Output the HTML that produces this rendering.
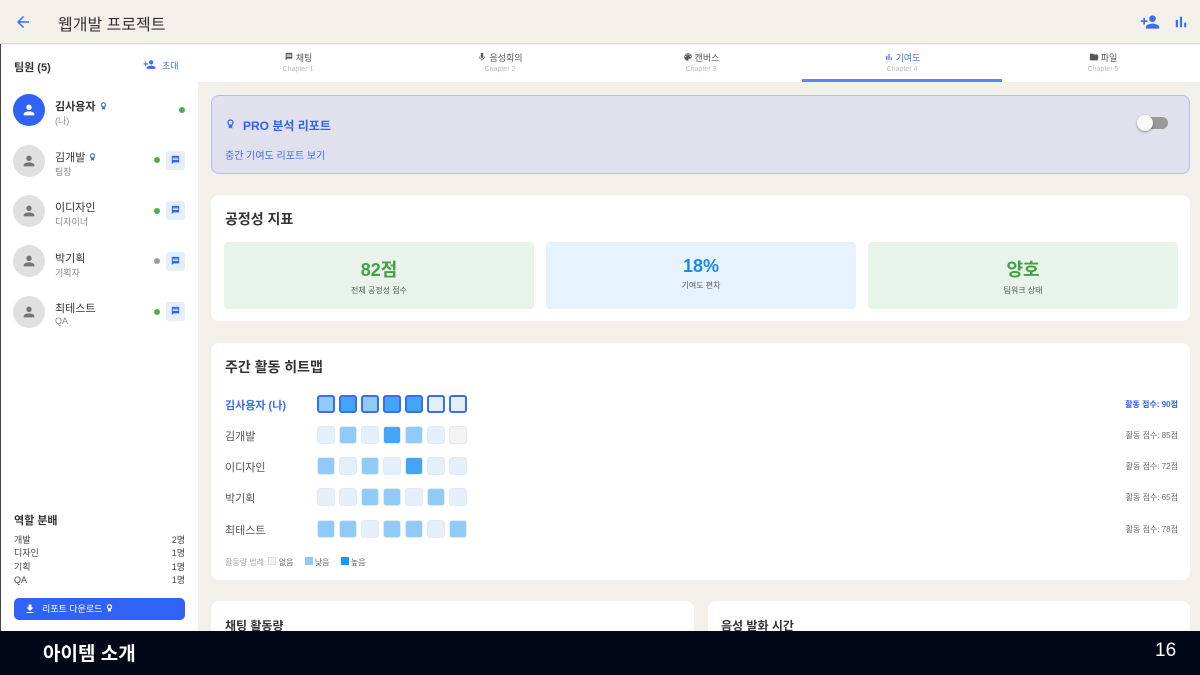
<!DOCTYPE html>
<html><head><meta charset="utf-8"><style>
*{box-sizing:border-box;margin:0;padding:0}
body{width:1200px;height:675px;overflow:hidden;background:#f3f0ea;font-family:"Liberation Sans","Noto Sans CJK KR",sans-serif;position:relative;color:#222}
.abs{position:absolute}
.hdr{left:0;top:0;width:1200px;height:44px;background:#f3f0ea;border-bottom:1px solid #d8d8d8}
.side{left:1px;top:45px;width:197px;height:586px;background:#fff}
.tabs{left:198px;top:45px;width:1002px;height:37px;background:#fff}
.tab{position:absolute;top:0;width:200px;height:37px;text-align:center;font-size:9px;color:#555}
.tab svg{vertical-align:-1px;margin-right:2px}
.tab .c{font-size:7px;color:#bbb;margin-top:2px}
.card{position:absolute;background:#fff;border-radius:8px}
.av{position:absolute;left:13px;width:32px;height:32px;border-radius:50%;background:#e0e0e0}
.nm{position:absolute;left:55px;font-size:11px;color:#333}
.sb{position:absolute;left:55px;font-size:9px;color:#888}
.dot{position:absolute;width:6px;height:6px;border-radius:50%;background:#4caf50}
.chat{position:absolute;left:166px;width:19px;height:19px;background:#e3effd;border-radius:3px}
.cell{position:absolute;width:18px;height:18px;border-radius:3px;border:1px solid #e3eaf3}
.rl{position:absolute;left:225px;font-size:11px;color:#555}
.sc{position:absolute;right:22px;font-size:8px;color:#666}
.aw{display:inline-block;vertical-align:-1px}
</style></head><body>
<div class="abs hdr"></div>
<svg class="abs" style="left:14px;top:13px" width="18" height="18" viewBox="0 0 24 24"><path d="M20 11H7.8l5.6-5.6L12 4l-8 8 8 8 1.4-1.4L7.8 13H20z" fill="#3a6cf4"/></svg>
<div class="abs" style="left:58px;top:11px;font-size:16px;color:#333">웹개발 프로젝트</div>
<svg class="abs" style="left:1140px;top:12px" width="20" height="20" viewBox="0 0 24 24"><path d="M15 12c2.2 0 4-1.8 4-4s-1.8-4-4-4-4 1.8-4 4 1.8 4 4 4zm-9-2V7H4v3H1v2h3v3h2v-3h3v-2H6zm9 4c-2.7 0-8 1.3-8 4v2h16v-2c0-2.7-5.3-4-8-4z" fill="#3a6cf4"/></svg>
<svg class="abs" style="left:1172px;top:13px" width="18" height="18" viewBox="0 0 24 24"><path d="M5 9.2h3V19H5zM10.6 5h2.8v14h-2.8zm5.6 8H19v6h-2.8z" fill="#3a6cf4"/></svg>

<div class="abs side"></div>
<div class="abs" style="left:0;top:44px;width:1px;height:587px;background:#444"></div>
<div class="abs" style="left:14px;top:59px;font-size:11px;font-weight:bold;color:#333">팀원 (5)</div>
<svg class="abs" style="left:143px;top:58px" width="13" height="13" viewBox="0 0 24 24"><path d="M15 12c2.2 0 4-1.8 4-4s-1.8-4-4-4-4 1.8-4 4 1.8 4 4 4zm-9-2V7H4v3H1v2h3v3h2v-3h3v-2H6zm9 4c-2.7 0-8 1.3-8 4v2h16v-2c0-2.7-5.3-4-8-4z" fill="#3a6cf4"/></svg>
<div class="abs" style="left:162px;top:59px;font-size:9px;color:#3a6cf4">초대</div>

<div class="av" style="top:94px;background:#2f62f5"></div>
<svg class="abs" style="left:21px;top:102px" width="16" height="16" viewBox="0 0 24 24"><path d="M12 12c2.2 0 4-1.8 4-4s-1.8-4-4-4-4 1.8-4 4 1.8 4 4 4zm0 2c-2.7 0-8 1.3-8 4v2h16v-2c0-2.7-5.3-4-8-4z" fill="#fff"/></svg>
<div class="nm" style="top:98px;font-weight:bold">김사용자 <svg class="aw" width="9" height="10" viewBox="0 0 24 24"><path d="M12 2a7 7 0 00-4 12.7V22l4-2 4 2v-7.3A7 7 0 0012 2zm0 11a4 4 0 110-8 4 4 0 010 8z" fill="#3a6cf4"/></svg></div><div class="sb" style="top:114px">(나)</div>
<div class="dot" style="left:179px;top:107px"></div>

<div class="av" style="top:145px"></div><div class="nm" style="top:149px">김개발 <svg class="aw" width="9" height="10" viewBox="0 0 24 24"><path d="M12 2a7 7 0 00-4 12.7V22l4-2 4 2v-7.3A7 7 0 0012 2zm0 11a4 4 0 110-8 4 4 0 010 8z" fill="#3a6cf4"/></svg></div><div class="sb" style="top:165px">팀장</div><div class="dot" style="left:154px;top:157px"></div><div class="chat" style="top:151px"></div>
<div class="av" style="top:195px"></div><div class="nm" style="top:199px">이디자인</div><div class="sb" style="top:215px">디자이너</div><div class="dot" style="left:154px;top:208px"></div><div class="chat" style="top:201px"></div>
<div class="av" style="top:245px"></div><div class="nm" style="top:250px">박기획</div><div class="sb" style="top:266px">기획자</div><div class="dot" style="left:154px;top:258px;background:#9e9e9e"></div><div class="chat" style="top:252px"></div>
<div class="av" style="top:296px"></div><div class="nm" style="top:300px">최테스트</div><div class="sb" style="top:316px">QA</div><div class="dot" style="left:154px;top:309px"></div><div class="chat" style="top:302px"></div>
<svg class="abs" style="left:21px;top:153px" width="16" height="16" viewBox="0 0 24 24"><path d="M12 12c2.2 0 4-1.8 4-4s-1.8-4-4-4-4 1.8-4 4 1.8 4 4 4zm0 2c-2.7 0-8 1.3-8 4v2h16v-2c0-2.7-5.3-4-8-4z" fill="#757575"/></svg>
<svg class="abs" style="left:21px;top:203px" width="16" height="16" viewBox="0 0 24 24"><path d="M12 12c2.2 0 4-1.8 4-4s-1.8-4-4-4-4 1.8-4 4 1.8 4 4 4zm0 2c-2.7 0-8 1.3-8 4v2h16v-2c0-2.7-5.3-4-8-4z" fill="#757575"/></svg>
<svg class="abs" style="left:21px;top:253px" width="16" height="16" viewBox="0 0 24 24"><path d="M12 12c2.2 0 4-1.8 4-4s-1.8-4-4-4-4 1.8-4 4 1.8 4 4 4zm0 2c-2.7 0-8 1.3-8 4v2h16v-2c0-2.7-5.3-4-8-4z" fill="#757575"/></svg>
<svg class="abs" style="left:21px;top:304px" width="16" height="16" viewBox="0 0 24 24"><path d="M12 12c2.2 0 4-1.8 4-4s-1.8-4-4-4-4 1.8-4 4 1.8 4 4 4zm0 2c-2.7 0-8 1.3-8 4v2h16v-2c0-2.7-5.3-4-8-4z" fill="#757575"/></svg>
<svg class="abs" style="left:170px;top:155px" width="11" height="11" viewBox="0 0 24 24"><path d="M20 2H4v18l4-4h12zM6 9h12v2H6zm0-3h12v2H6z" fill="#2f62f5"/></svg>
<svg class="abs" style="left:170px;top:205px" width="11" height="11" viewBox="0 0 24 24"><path d="M20 2H4v18l4-4h12zM6 9h12v2H6zm0-3h12v2H6z" fill="#2f62f5"/></svg>
<svg class="abs" style="left:170px;top:256px" width="11" height="11" viewBox="0 0 24 24"><path d="M20 2H4v18l4-4h12zM6 9h12v2H6zm0-3h12v2H6z" fill="#2f62f5"/></svg>
<svg class="abs" style="left:170px;top:306px" width="11" height="11" viewBox="0 0 24 24"><path d="M20 2H4v18l4-4h12zM6 9h12v2H6zm0-3h12v2H6z" fill="#2f62f5"/></svg>

<div class="abs" style="left:14px;top:512px;font-size:11px;font-weight:bold;color:#333">역할 분배</div>
<div class="abs" style="left:14px;top:534px;width:171px;font-size:9px;color:#444;line-height:13.3px">
<div style="display:flex;justify-content:space-between"><span>개발</span><span>2명</span></div>
<div style="display:flex;justify-content:space-between"><span>디자인</span><span>1명</span></div>
<div style="display:flex;justify-content:space-between"><span>기획</span><span>1명</span></div>
<div style="display:flex;justify-content:space-between"><span>QA</span><span>1명</span></div></div>
<div class="abs" style="left:14px;top:598px;width:171px;height:22px;background:#2f62f5;border-radius:5px;color:#fff;font-size:9px;line-height:22px;padding-left:28px">리포트 다운로드 <svg class="aw" width="9" height="10" viewBox="0 0 24 24"><path d="M12 2a7 7 0 00-4 12.7V22l4-2 4 2v-7.3A7 7 0 0012 2zm0 11a4 4 0 110-8 4 4 0 010 8z" fill="#fff"/></svg></div>
<svg class="abs" style="left:24px;top:603px" width="12" height="12" viewBox="0 0 24 24"><path d="M19 9h-4V3H9v6H5l7 7 7-7zM5 18v2h14v-2z" fill="#fff"/></svg>

<div class="abs tabs"></div>
<div class="tab" style="left:198px;top:51px"><svg width="10" height="10" viewBox="0 0 24 24"><path d="M20 2H4v18l4-4h12zM6 9h12v2H6zm0-3h12v2H6z" fill="#555"/></svg>채팅<div class="c">Chapter 1</div></div>
<div class="tab" style="left:400px;top:51px"><svg width="10" height="10" viewBox="0 0 24 24"><path d="M12 14a3 3 0 003-3V5a3 3 0 00-6 0v6a3 3 0 003 3zm5.3-3A5.3 5.3 0 0112 16.1 5.3 5.3 0 016.7 11H5a7 7 0 006 6.7V21h2v-3.3A7 7 0 0019 11z" fill="#555"/></svg>음성회의<div class="c">Chapter 2</div></div>
<div class="tab" style="left:601px;top:51px"><svg width="10" height="10" viewBox="0 0 24 24"><path d="M12 3a9 9 0 000 18c.8 0 1.5-.7 1.5-1.5 0-.4-.1-.7-.4-1-.2-.3-.4-.6-.4-1 0-.8.7-1.5 1.5-1.5H16a5 5 0 005-5c0-4.400-4-8-9-8zM6.5 12a1.5 1.5 0 110-3 1.5 1.5 0 010 3zm3-4a1.5 1.5 0 110-3 1.5 1.5 0 010 3zm5 0a1.5 1.5 0 110-3 1.5 1.5 0 010 3zm3 4a1.5 1.5 0 110-3 1.5 1.5 0 010 3z" fill="#555"/></svg>캔버스<div class="c">Chapter 3</div></div>
<div class="tab" style="left:802px;top:51px;color:#3a6cf4"><svg width="10" height="10" viewBox="0 0 24 24"><path d="M5 9.2h3V19H5zM10.6 5h2.8v14h-2.8zm5.6 8H19v6h-2.8z" fill="#3a6cf4"/></svg>기여도<div class="c">Chapter 4</div></div>
<div class="tab" style="left:1003px;top:51px"><svg width="10" height="10" viewBox="0 0 24 24"><path d="M10 4H4a2 2 0 00-2 2v12a2 2 0 002 2h16a2 2 0 002-2V8a2 2 0 00-2-2h-8z" fill="#555"/></svg>파일<div class="c">Chapter 5</div></div>
<div class="abs" style="left:802px;top:79px;width:200px;height:3px;background:#5b84f6"></div>

<div class="card" style="left:211px;top:95px;width:979px;height:79px;background:#e1e1ed;border:1px solid #aebff0"></div>
<svg class="abs" style="left:225px;top:118px" width="11" height="12" viewBox="0 0 24 24"><path d="M12 2a7 7 0 00-4 12.7V22l4-2 4 2v-7.3A7 7 0 0012 2zm0 11a4 4 0 110-8 4 4 0 010 8z" fill="#3a6cf4"/></svg>
<div class="abs" style="left:243px;top:117px;font-size:12px;font-weight:bold;color:#2f62f5">PRO 분석 리포트</div>
<div class="abs" style="left:225px;top:147px;font-size:10px;color:#3a6cf4">중간 기여도 리포트 보기</div>
<div class="abs" style="left:1140px;top:117px;width:28px;height:12px;border-radius:6px;background:#999"></div>
<div class="abs" style="left:1137px;top:115px;width:16px;height:16px;border-radius:50%;background:#fafafa;box-shadow:0 1px 2px rgba(0,0,0,.4)"></div>

<div class="card" style="left:211px;top:195px;width:979px;height:126px"></div>
<div class="abs" style="left:225px;top:209px;font-size:14px;font-weight:bold;color:#333">공정성 지표</div>
<div class="abs" style="left:224px;top:242px;width:310px;height:67px;background:#e8f4ea;border-radius:4px;text-align:center"><div style="font-size:18px;font-weight:bold;color:#43a047;margin-top:14px">82점</div><div style="font-size:8px;color:#555;margin-top:3px">전체 공정성 점수</div></div>
<div class="abs" style="left:546px;top:242px;width:310px;height:67px;background:#e6f2fd;border-radius:4px;text-align:center"><div style="font-size:18px;font-weight:bold;color:#1e88e5;margin-top:14px">18%</div><div style="font-size:8px;color:#555;margin-top:3px">기여도 편차</div></div>
<div class="abs" style="left:868px;top:242px;width:310px;height:67px;background:#e8f4ea;border-radius:4px;text-align:center"><div style="font-size:18px;font-weight:bold;color:#43a047;margin-top:14px">양호</div><div style="font-size:8px;color:#555;margin-top:3px">팀워크 상태</div></div>

<div class="card" style="left:211px;top:343px;width:979px;height:237px"></div>
<div class="abs" style="left:225px;top:357px;font-size:14px;font-weight:bold;color:#333">주간 활동 히트맵</div>
<div id="hm"></div>
<div class="rl" style="top:397px;color:#3a6cf4;font-weight:bold">김사용자 (나)</div>
<div class="rl" style="top:428px">김개발</div>
<div class="rl" style="top:459px">이디자인</div>
<div class="rl" style="top:490px">박기획</div>
<div class="rl" style="top:522px">최테스트</div>
<div class="sc" style="top:399px;color:#2f62f5;font-weight:bold">활동 점수: 90점</div>
<div class="sc" style="top:430px">활동 점수: 85점</div>
<div class="sc" style="top:461px">활동 점수: 72점</div>
<div class="sc" style="top:492px">활동 점수: 65점</div>
<div class="sc" style="top:524px">활동 점수: 78점</div>
<div class="abs" style="left:225px;top:557px;font-size:8px;color:#aaa">활동량 범례: <span style="display:inline-block;width:8px;height:8px;background:#f3f3f3;border:1px solid #ddd"></span> <span style="color:#666">없음</span> &nbsp; &nbsp; <span style="display:inline-block;width:8px;height:8px;background:#90caf9"></span> <span style="color:#666">낮음</span> &nbsp; &nbsp; <span style="display:inline-block;width:8px;height:8px;background:#2196f3"></span> <span style="color:#666">높음</span></div>

<div class="card" style="left:211px;top:601px;width:483px;height:40px"></div>
<div class="card" style="left:708px;top:601px;width:482px;height:40px"></div>
<div class="abs" style="left:225px;top:617px;font-size:12px;font-weight:bold;color:#333">채팅 활동량</div>
<div class="abs" style="left:721px;top:617px;font-size:12px;font-weight:bold;color:#333">음성 발화 시간</div>

<div class="abs" style="left:0;top:631px;width:1200px;height:44px;background:#020817"></div>
<div class="abs" style="left:43px;top:639px;font-size:19px;font-weight:bold;color:#fff">아이템 소개</div>
<div class="abs" style="left:1155px;top:640px;font-size:19px;color:#fff">16</div>

<script>
var L='#e3f0fc',M='#90caf9',H='#42a5f5',N='#f3f3f3';
var rows=[[M,H,M,H,H,L,L],[L,M,L,H,M,L,N],[M,L,M,L,H,L,L],[L,L,M,M,L,M,L],[M,M,L,M,M,L,M]];
var tops=[395,426,457,488,520],h='';
rows.forEach(function(r,i){r.forEach(function(c,j){var b=i==0?'border:2px solid #3a6cf4;':'';h+='<div class="cell" style="left:'+(317+j*22)+'px;top:'+tops[i]+'px;background:'+c+';'+b+'"></div>';});});
document.getElementById('hm').innerHTML=h;
</script>
</body></html>
